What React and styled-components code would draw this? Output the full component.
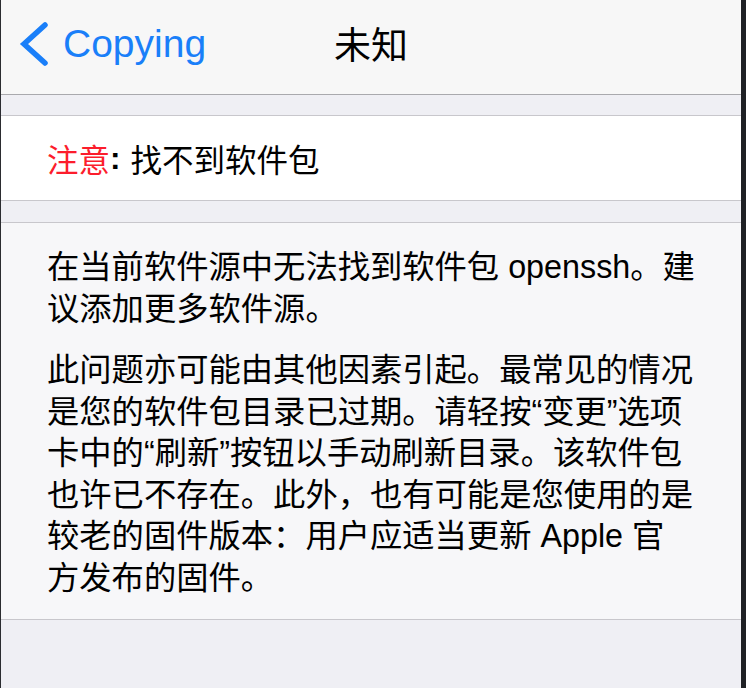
import React from "react";
import styled, { createGlobalStyle } from "styled-components";

const Global = createGlobalStyle`
  html, body { margin: 0; padding: 0; background: #efeff4; }
  body { font-family: "Liberation Sans", "Noto Sans CJK SC", sans-serif; }
`;

const Frame = styled.div`
  width: 746px;
  height: 688px;
  box-sizing: border-box;
  border-left: 1px solid #2b2c30;
  border-right: 5px solid #1f2125;
  background: #efeff4;
  display: flex;
  flex-direction: column;
  overflow: hidden;
`;

const NavBar = styled.div`
  height: 94px;
  flex: none;
  background: #f7f7f7;
  border-bottom: 1px solid #a9a9ad;
  display: grid;
  grid-template-columns: 1fr auto 1fr;
  align-items: center;
`;

const Back = styled.div`
  display: flex;
  align-items: center;
  gap: 14px;
  padding-left: 18px;
  color: #1a7ff9;
  font-size: 39px;
  font-family: "Liberation Sans", sans-serif;
  margin-top: -6px;
`;

const Title = styled.div`
  font-size: 37px;
  color: #000;
  font-family: "Noto Sans CJK SC", sans-serif;
  margin-top: -8px;
`;

const Gap = styled.div`
  height: ${(p) => p.$h}px;
  flex: none;
  background: #efeff4;
`;

const Cell = styled.div`
  height: 84px;
  flex: none;
  background: #ffffff;
  border-top: 1px solid #c8c7cc;
  border-bottom: 1px solid #c8c7cc;
  display: flex;
  align-items: center;
  padding-left: 46px;
  font-size: 31.5px;
  color: #000;
  font-family: "Liberation Sans", "Noto Sans CJK SC", sans-serif;
`;

const Warn = styled.span`
  color: #fc1d2c;
`;

const Colon = styled.span`
  font-weight: bold;
  margin-right: 10px;
`;

const Body = styled.div`
  flex: none;
  background: #f7f7f9;
  border-top: 1px solid #c8c7cc;
  border-bottom: 1px solid #c8c7cc;
  padding: 24px 0 20px 46px;
  display: flex;
  flex-direction: column;
  gap: 20px;
`;

const Para = styled.p`
  margin: 0;
  font-size: 32.3px;
  line-height: 41.5px;
  color: #000;
  white-space: nowrap;
  font-family: "Liberation Sans", "Noto Sans CJK SC", sans-serif;
`;

export default function App() {
  return (
    <>
      <Global />
      <Frame>
        <NavBar>
          <Back>
            <svg width="30" height="44" viewBox="0 0 30 44">
              <polyline
                points="26,3 5,22 26,41"
                fill="none"
                stroke="#1a7ff9"
                strokeWidth="5.5"
                strokeLinecap="round"
                strokeLinejoin="miter"
              />
            </svg>
            <span>Copying</span>
          </Back>
          <Title>未知</Title>
          <div />
        </NavBar>
        <Gap $h={20} />
        <Cell>
          <Warn>注意</Warn>
          <Colon>:</Colon>
          找不到软件包
        </Cell>
        <Gap $h={21} />
        <Body>
          <Para>
            在当前软件源中无法找到软件包 openssh。建
            <br />
            议添加更多软件源。
          </Para>
          <Para>
            此问题亦可能由其他因素引起。最常见的情况
            <br />
            是您的软件包目录已过期。请轻按“变更”选项
            <br />
            卡中的“刷新”按钮以手动刷新目录。该软件包
            <br />
            也许已不存在。此外，也有可能是您使用的是
            <br />
            较老的固件版本：用户应适当更新 Apple 官
            <br />
            方发布的固件。
          </Para>
        </Body>
      </Frame>
    </>
  );
}
